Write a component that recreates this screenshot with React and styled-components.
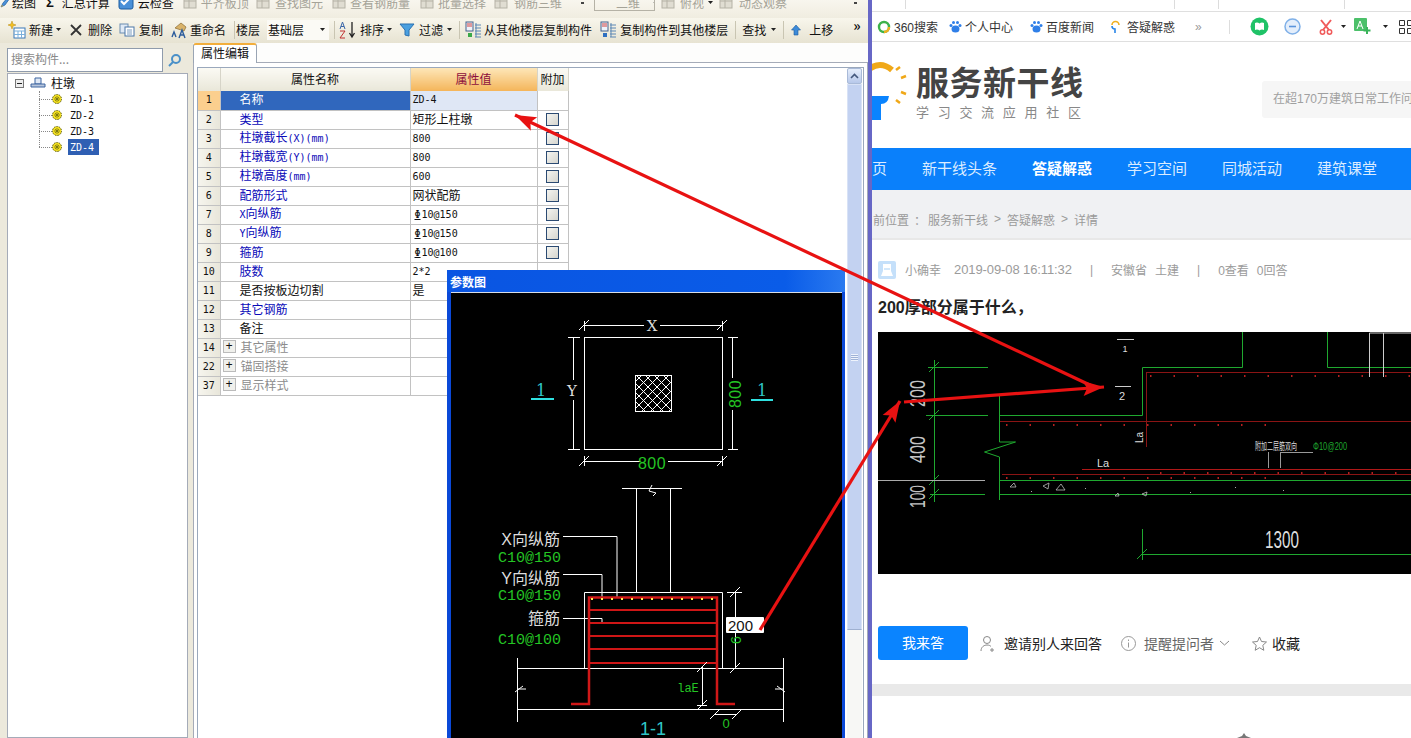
import React from "react";
import styled, { createGlobalStyle } from "styled-components";

const GlobalStyle = createGlobalStyle`
  html, body { margin: 0; padding: 0; background: #fff; overflow: hidden; }
  * { box-sizing: border-box; }
`;

const CJK = `"Noto Sans CJK SC", sans-serif`;
const LATIN_CJK = `"Liberation Sans", "Noto Sans CJK SC", sans-serif`;
const GREEN = "#24c524";
const CYAN = "#2fc6c6";
const CAD_GREEN = "#1fa82f";
const CAD_RED = "#8a1414";

/* ---------- small toolbar icons ---------- */

const Caret = () => (
  <svg width="5" height="3" viewBox="0 0 5 3">
    <path d="M0 0h5L2.5 3z" fill="#222" />
  </svg>
);

const NewIcon = () => (
  <svg width="18" height="18" viewBox="0 0 18 18">
    <rect x="6" y="7" width="11" height="10" fill="#fff" stroke="#3a78b8" />
    <path d="M6 10h11M6 13.5h11M10 10v7M13.5 10v7" stroke="#7ab0dc" />
    <path d="M4 0l1 3 3 1-3 1-1 3-1-3-3-1 3-1z" fill="#f4c020" stroke="#b88a10" strokeWidth=".5" />
  </svg>
);
const DeleteIcon = () => (
  <svg width="12" height="12" viewBox="0 0 12 12">
    <path d="M1 1l10 10M11 1L1 11" stroke="#333" strokeWidth="1.8" />
  </svg>
);
const CopyIcon = () => (
  <svg width="16" height="14" viewBox="0 0 16 14">
    <rect x="1" y="1" width="8" height="9" fill="#dfe9f5" stroke="#6a8cb0" />
    <rect x="6" y="4" width="9" height="9" fill="#fff" stroke="#4a76a8" />
    <path d="M8 7h5M8 9h5M8 11h5" stroke="#7a9cc0" />
  </svg>
);
const RenameIcon = () => (
  <svg width="17" height="18" viewBox="0 0 17 18">
    <path d="M5 7l6-5 5 4-2 4z" fill="#d9b36a" stroke="#8a6a30" strokeWidth=".7" />
    <path d="M2 16l2-5 2 5M9 17l3-8 3 8M10 14h4" fill="none" stroke="#2c5c9c" strokeWidth="1.4" />
  </svg>
);
const SortIcon = () => (
  <svg width="18" height="18" viewBox="0 0 18 18">
    <path d="M1 8l2.5-7L6 8M2 5.5h3" fill="none" stroke="#3a66a8" />
    <path d="M1 10h5l-5 7h5" fill="none" stroke="#c03030" />
    <path d="M13 1v14M10.5 12l2.5 4 2.5-4" fill="none" stroke="#222" strokeWidth="1.3" />
  </svg>
);
const FilterIcon = () => (
  <svg width="16" height="14" viewBox="0 0 16 14">
    <path d="M1 1h14L10 7v6l-4-1V7z" fill="#4aa0e0" stroke="#2a70b0" />
  </svg>
);
const FloorCopyIcon = ({ green }) => (
  <svg width="17" height="17" viewBox="0 0 17 17">
    <rect x="1" y="1" width="7" height="9" fill="#eef3fa" stroke="#44608a" />
    <path d="M2 3h5M2 5h5" stroke="#d04040" />
    <path d="M3 12h4v4H3z" fill={green ? "#3aa848" : "#2f6fc0"} />
    <path d="M10 4h6M10 7h6M10 10h6M10 13h6M10 16h6M11 2v14" stroke="#5a86b4" />
  </svg>
);
const UpIcon = () => (
  <svg width="10" height="12" viewBox="0 0 10 12">
    <path d="M5 1l4.5 5H7v5H3V6H.5z" fill="#3d8ad8" stroke="#1d5ca0" strokeWidth=".6" />
  </svg>
);
const FadedIcon = () => (
  <svg width="15" height="14" viewBox="0 0 15 14">
    <rect x="1" y="1" width="12" height="12" fill="#e0ddd2" stroke="#b5b2a6" />
    <path d="M1 6h12M6 1v12" stroke="#b5b2a6" />
  </svg>
);
const DrawIcon = () => (
  <svg width="10" height="16" viewBox="0 0 10 16">
    <path d="M9 2L3 9l-2 4 4-2 5-7z" fill="#4a90d8" stroke="#1d5ca0" strokeWidth=".7" />
    <path d="M1 13l2-1-1-1z" fill="#f0b020" />
  </svg>
);
const CheckIcon = () => (
  <svg width="16" height="16" viewBox="0 0 16 16">
    <rect x="1" y="1" width="14" height="14" rx="2" fill="#4a90d8" stroke="#1d5ca0" />
    <path d="M3 7l3 3 6-6" fill="none" stroke="#fff" strokeWidth="2" />
  </svg>
);
const SearchGlass = () => (
  <svg width="14" height="14" viewBox="0 0 14 14">
    <circle cx="8" cy="6" r="4" fill="none" stroke="#4a90c8" strokeWidth="2" />
    <path d="M5 9l-4 4" stroke="#4a90c8" strokeWidth="2" />
  </svg>
);
const PierIcon = () => (
  <svg width="16" height="12" viewBox="0 0 16 12">
    <path d="M5 1h6v6H5z" fill="#dfe8f5" stroke="#3c64a0" />
    <path d="M1 7h14v3H1z" fill="#b8c6dc" stroke="#3c64a0" />
  </svg>
);
const GearIcon = () => (
  <svg width="10" height="10" viewBox="0 0 10 10">
    <circle cx="5" cy="5" r="4.5" fill="#f3df20" stroke="#5a5a10" strokeDasharray="1.5 1" />
    <path d="M2 5h6M5 2v6M3 3l4 4M7 3L3 7" stroke="#6a6a10" strokeWidth=".7" />
  </svg>
);

/* ---------- application pane ---------- */

const Page = styled.div`
  position: relative;
  display: flex;
  width: 1411px;
  height: 738px;
  overflow: hidden;
  font-family: ${CJK};
  font-size: 12px;
  color: #111;
`;

const AppPane = styled.div`
  display: flex;
  flex-direction: column;
  width: 868px;
  flex: none;
  background: #ece9dc;
`;

const TopStrip = styled.div`
  height: 18px;
  overflow: hidden;
  background: linear-gradient(#f8f6ee, #f0ede0);
`;

const TopInner = styled.div`
  display: flex;
  align-items: center;
  height: 18px;
  margin-top: -7px;
`;

const Toolbar = styled.div`
  display: flex;
  align-items: center;
  height: 25px;
  padding-bottom: 2px;
  background: linear-gradient(#f8f6ec, #e7e3d2);
`;

const Tool = styled.div`
  display: flex;
  align-items: center;
  flex: none;
  margin-left: ${(p) => p.$ml || 0}px;
  gap: ${(p) => (p.$gap === undefined ? 3 : p.$gap)}px;
  color: ${(p) => (p.$faded ? "#a5a398" : "#111")};
  white-space: nowrap;
`;

const Sigma = styled.b`
  font-family: "Liberation Sans", sans-serif;
  font-size: 13px;
`;

const Handle = styled.div`
  flex: none;
  width: 3px;
  height: 8px;
  margin-left: ${(p) => p.$ml}px;
  background: repeating-linear-gradient(#444 0 2px, transparent 2px 4px);
`;

const Overflow = styled.div`
  flex: none;
  margin: -9px 0 0 ${(p) => p.$ml}px;
  font-size: 14px;
  font-weight: 700;
  line-height: 14px;
`;

const Sep = styled.div`
  flex: none;
  width: 1px;
  height: 18px;
  margin-left: ${(p) => p.$ml || 0}px;
  background: #c9c5b2;
`;

const FloorSelect = styled.div`
  display: flex;
  align-items: center;
  justify-content: space-between;
  flex: none;
  width: 62px;
  height: 20px;
  margin-left: ${(p) => p.$ml || 0}px;
  padding: 0 4px 0 1px;
  background: #fbfaf5;
`;

const ViewSelect = styled.div`
  display: flex;
  align-items: center;
  flex: none;
  width: 61px;
  height: 18px;
  margin-left: ${(p) => p.$ml || 0}px;
  padding-left: 21px;
  gap: 13px;
  white-space: nowrap;
  color: #a5a398;
  border: 1px solid #b5b2a6;
`;

const Body = styled.div`
  display: flex;
  flex: 1;
  min-height: 0;
`;

const Sidebar = styled.div`
  display: flex;
  flex-direction: column;
  flex: none;
  width: 193px;
  padding: 5px 5px 0 7px;
`;

const SearchRow = styled.div`
  display: flex;
  flex: none;
  width: 180px;
  height: 24px;
`;

const SearchInput = styled.div`
  flex: 1;
  padding-left: 3px;
  line-height: 19px;
  color: #8a8a8a;
  background: #fff;
  border: 1px solid #8f9bac;
`;

const SearchButton = styled.div`
  display: flex;
  align-items: center;
  justify-content: center;
  width: 24px;
`;

const Tree = styled.div`
  flex: 1;
  margin-top: 1px;
  padding: 1px 0 0 7px;
  background: #fff;
  border: 1px solid #a5abb8;
`;

const TreeRoot = styled.div`
  display: flex;
  align-items: center;
  height: 16px;
`;

const TreeRootLabel = styled.span`
  margin-left: 5px;
  line-height: 14px;
`;

const MinusBox = styled.div`
  position: relative;
  width: 9px;
  height: 9px;
  margin-right: 6px;
  background: #eee;
  border: 1px solid #777;
  &::after {
    content: "";
    position: absolute;
    left: 1px;
    top: 3px;
    width: 5px;
    height: 1px;
    background: #222;
  }
`;

const ChildList = styled.div`
  position: relative;
  margin-left: 24px;
  &::before {
    content: "";
    position: absolute;
    left: 0;
    top: 0;
    bottom: 8px;
    border-left: 1px dotted #888;
  }
`;

const TreeChild = styled.div`
  display: flex;
  align-items: center;
  height: 16px;
`;

const Connector = styled.div`
  width: 13px;
  border-top: 1px dotted #888;
`;

const Latin = styled.span`
  font-family: "DejaVu Sans Mono", monospace;
  font-size: 10px;
`;

const ChildLabel = styled(Latin)`
  margin-left: 6px;
  padding: 1px 5px 0 2px;
  line-height: 15px;
  color: ${(p) => (p.$selected ? "#fff" : "#111")};
  background: ${(p) => (p.$selected ? "#2f5fb3" : "transparent")};
`;

const Content = styled.div`
  display: flex;
  flex-direction: column;
  flex: 1;
  min-width: 0;
`;

const TabStrip = styled.div`
  display: flex;
  flex: none;
  height: 19px;
  background: #fdfdfc;
`;

const Tab = styled.div`
  width: 64px;
  height: 20px;
  padding-left: 7px;
  line-height: 16px;
  background: #fff;
  border: 1px solid #9aa5b4;
  border-top: 2px solid #f2ae3c;
  border-bottom: none;
  border-radius: 3px 3px 0 0;
  z-index: 1;
`;

const Panel = styled.div`
  display: flex;
  flex: 1;
  min-height: 0;
  padding: 4px 3px 0 3px;
  background: #fff;
  border: 1px solid #a5abb8;
  border-bottom: none;
`;

const GridFrame = styled.div`
  display: flex;
  flex: 1;
  min-width: 0;
  border: 1px solid #9aa8bc;
  border-bottom: none;
  padding-right: 1px;
`;

const GridArea = styled.div`
  flex: 1;
  min-width: 0;
`;

const Table = styled.table`
  width: 370px;
  table-layout: fixed;
  border-collapse: collapse;
  line-height: 14px;
  & col:nth-child(1) { width: 22px; }
  & col:nth-child(2) { width: 190px; }
  & col:nth-child(3) { width: 127px; }
  & col:nth-child(4) { width: 31px; }
`;

const HeadCell = styled.th`
  height: 23px;
  padding: 0 0 2px;
  font-weight: 400;
  font-size: 12px;
  color: ${(p) => (p.$active ? "#8c0f3c" : "#111")};
  background: ${(p) =>
    p.$active
      ? "linear-gradient(#fde6b8, #f4b55a)"
      : "linear-gradient(#fbfaf4, #e9e7d9)"};
  border-right: 1px solid #d6d4c8;
`;

const NumCell = styled.td`
  height: 19px;
  padding: 0;
  text-align: center;
  font-family: "DejaVu Sans Mono", monospace;
  font-size: 10px;
  background: ${(p) =>
    p.$selected ? "#fbcf8e" : "linear-gradient(90deg, #f6f5ee, #e8e6da)"};
  border-bottom: 1px solid #c2c2c2;
`;

const NameCell = styled.td`
  padding: 0 0 2px 19px;
  white-space: nowrap;
  color: ${(p) =>
    p.$selected ? "#fff" : p.$tone === "link" ? "#0a0ab8" : p.$tone === "group" ? "#8c8c8c" : "#111"};
  background: ${(p) => (p.$selected ? "#3067bd" : "#fff")};
  border: 1px solid #c2c2c2;
  border-top: none;
`;

const ValueCell = styled.td`
  padding: 0 0 2px 2px;
  white-space: nowrap;
  overflow: hidden;
  background: ${(p) => (p.$selected ? "#dfe7f5" : "#fff")};
  border: 1px solid #c2c2c2;
  border-top: none;
`;

const AttachCell = styled.td`
  padding: 0;
  background: #fff;
  border: 1px solid #c2c2c2;
  border-top: none;
`;

const CheckBox = styled.div`
  width: 13px;
  height: 13px;
  margin: 0 auto;
  background: linear-gradient(135deg, #f4f4f0, #d5d5cf);
  border: 1px solid #2b4a72;
`;

const GroupName = styled.div`
  display: flex;
  align-items: center;
  margin-left: -17px;
  gap: 5px;
`;

const PlusBox = styled.div`
  display: flex;
  align-items: center;
  justify-content: center;
  width: 13px;
  height: 13px;
  font-family: "Liberation Mono", monospace;
  font-size: 12px;
  line-height: 1;
  color: #111;
  background: #f0f0ec;
  border: 1px solid #bbb;
`;

const RebarMark = styled.span`
  margin-left: 2px;
  margin-right: 1px;
  text-decoration: underline;
`;

const Scrollbar = styled.div`
  display: flex;
  flex-direction: column;
  flex: none;
  width: 15px;
  background: #f7f7f5;
`;

const ScrollUp = styled.div`
  display: flex;
  align-items: center;
  justify-content: center;
  height: 16px;
  background: linear-gradient(#e6eefb, #b7c8ea);
  border: 1px solid #a9bad8;
  border-radius: 2px;
`;

const ScrollThumb = styled.div`
  display: flex;
  align-items: center;
  justify-content: center;
  height: 546px;
  background: #c3d2f1;
  border: 1px solid #d8e2f6;
  border-bottom-color: #9fb0d0;
`;

const Grip = styled.div`
  width: 7px;
  height: 7px;
  background: repeating-linear-gradient(#eef3fc 0 1px, #9fb2d6 1px 2px);
`;

const Divider = styled.div`
  flex: none;
  width: 4px;
  background: #6767c6;
`;

/* ---------- parameter dialog ---------- */

const Dialog = styled.div`
  position: absolute;
  left: 447px;
  top: 270px;
  width: 398px;
  height: 468px;
  display: flex;
  flex-direction: column;
  padding: 0 3px 0 4px;
  background: #0b49d8;
  border-radius: 3px 3px 0 0;
`;

const DialogTitle = styled.div`
  flex: none;
  height: 22px;
  margin: 0 -3px 0 -4px;
  padding: 3px 0 0 3px;
  font-weight: 700;
  line-height: 18px;
  color: #fff;
  background: linear-gradient(90deg, #0a55e2, #0a5ce8 85%, #2a7af0);
`;

const DialogCanvas = styled.div`
  flex: 1;
  background: #000;
  border-top: 1px solid #d8dee8;
  overflow: hidden;
`;

const CadSvg = styled.svg`
  display: block;
`;

const tick = (x, y, key, color = "#fff") => (
  <line key={key} x1={x - 5} y1={y + 5} x2={x + 5} y2={y - 5} stroke={color} />
);

const CadLines = ({ d, color = "#fff", width = 1 }) => (
  <path d={d} fill="none" stroke={color} strokeWidth={width} />
);

const ParamDrawing = () => (
  <CadSvg width="391" height="445" viewBox="451 293 391 445">
    <defs>
      <pattern id="hatch" width="9" height="9" patternUnits="userSpaceOnUse">
        <path d="M0 0l9 9M9 0L0 9" stroke="#fff" strokeWidth="1" />
      </pattern>
    </defs>

    {/* plan */}
    <rect x="584.5" y="337.5" width="138" height="112" fill="none" stroke="#fff" />
    <rect x="635.5" y="375.5" width="36" height="36" fill="url(#hatch)" stroke="#fff" />
    <CadLines d="M584 325.5h60M660 325.5h62M573.5 337v112M732.5 337v112M584 461.5h56M668 461.5h54" />
    <CadLines d="M584.5 321v10M722.5 321v10M568 337.5h12M728 337.5h10M568 449.5h12M728 449.5h10M584.5 456v10M722.5 456v10" />
    {[[584, 325], [722, 325], [584, 461], [722, 461]].map(([x, y], i) => tick(x, y, i))}
    <rect x="566" y="380" width="14" height="20" fill="#000" />
    <rect x="728" y="378" width="15" height="32" fill="#000" />
    <text x="652" y="331" textAnchor="middle" fill="#ddd" fontSize="15" fontFamily="DejaVu Serif, serif">X</text>
    <text x="572" y="396" textAnchor="middle" fill="#ddd" fontSize="15" fontFamily="DejaVu Serif, serif">Y</text>
    <text x="652" y="469" textAnchor="middle" fill={GREEN} fontSize="16" fontFamily="Liberation Sans, sans-serif" letterSpacing="0.5">800</text>
    <text transform="translate(741 394) rotate(-90)" fill={GREEN} textAnchor="middle" fontSize="16" fontFamily="Liberation Sans, sans-serif" letterSpacing="0.5">
      800
    </text>
    <text x="541" y="396" textAnchor="middle" fill={CYAN} fontSize="16" fontFamily="DejaVu Serif, serif">1</text>
    <text x="762" y="396" textAnchor="middle" fill={CYAN} fontSize="16" fontFamily="DejaVu Serif, serif">1</text>
    <CadLines d="M531 399h23M751 400h22" color="#2fe0e0" width="2" />

    {/* section */}
    <CadLines d="M622 488.5h60M636.5 488v104M670.5 488v104M584.5 668V592.5h138V668M517 668.5h266M517 709.5h266M517.5 658v64M783.5 658v64" />
    <CadLines d="M652 485l-3 6 7 2-3 3M517 689h9M515 692l8-6M783 689h-8M785 692l-8-6" />
    <CadLines d="M563 536.5h54V597M563 574.5h39V597M563 618.5h39v5" />

    {/* rebar */}
    <CadLines d="M571 704h18V597.5h128V704h18" color="#d01818" width="2.5" />
    <CadLines d="M589 610h128M589 623h128M589 636h128M589 649h128M589 663h128" color="#cf1616" width="2" />
    {Array.from({ length: 13 }, (_, i) => (
      <rect key={i} x={591 + i * 10} y="598" width="2" height="2" fill="#ffe94a" />
    ))}

    {/* dimensions */}
    <CadLines d="M735.5 592v76M727 592.5h15M702.5 667v38M697 705.5h10M715 714.5h22" />
    {tick(735, 592, "a")}
    {tick(735, 668, "b")}
    {tick(702, 667, "c")}
    {tick(702, 705, "d")}
    {tick(715, 714, "e")}
    {tick(737, 714, "f")}

    {/* labels */}
    <g fontFamily={LATIN_CJK} fontSize="16" fill="#ddd" textAnchor="end">
      <text x="560" y="545">X向纵筋</text>
      <text x="560" y="584">Y向纵筋</text>
      <text x="560" y="624">箍筋</text>
    </g>
    <g fontFamily="Liberation Mono, monospace" fontSize="15" fill={GREEN} textAnchor="end">
      <text x="561" y="562">C10@150</text>
      <text x="561" y="600">C10@150</text>
      <text x="561" y="644">C10@100</text>
    </g>
    <text x="688" y="692" textAnchor="middle" fill={GREEN} fontSize="12" fontFamily="Liberation Mono, monospace">laE</text>
    <text x="726" y="728" textAnchor="middle" fill={GREEN} fontSize="13" fontFamily="Liberation Sans, sans-serif">0</text>
    <text x="653" y="735" textAnchor="middle" fill={CYAN} fontSize="18" fontFamily="Liberation Sans, sans-serif">1-1</text>

    <text transform="translate(741 640) rotate(-90)" textAnchor="middle" fill={GREEN} fontSize="14" fontFamily="Liberation Sans, sans-serif">6</text>
    <rect x="726" y="617" width="38" height="16" rx="1" fill="#fff" />
    <text x="728" y="631" fill="#111" fontSize="15" fontFamily="Liberation Sans, sans-serif">200</text>
  </CadSvg>
);

/* ---------- browser pane ---------- */

const Browser = styled.div`
  display: flex;
  flex-direction: column;
  flex: 1;
  min-width: 0;
  overflow: hidden;
  font-family: ${LATIN_CJK};
  background: #fff;
`;

const TabsLine = styled.div`
  flex: none;
  height: 12px;
  border-bottom: 1px solid #dfdfdf;
`;

const TabsTick = styled.div`
  display: inline-block;
  width: 1px;
  height: 9px;
  margin-left: ${(p) => p.$ml}px;
  background: #dcdcdc;
  vertical-align: top;
`;

const Bookmarks = styled.div`
  display: flex;
  align-items: center;
  flex: none;
  height: 30px;
  padding-left: 5px;
  font-size: 12px;
  color: #333;
  border-bottom: 1px solid #dfdfdf;
`;

const Bookmark = styled.div`
  display: flex;
  align-items: center;
  flex: none;
  margin-left: ${(p) => p.$ml || 0}px;
  gap: ${(p) => (p.$gap === undefined ? 3 : p.$gap)}px;
`;

const BarSep = styled.div`
  flex: none;
  width: 1px;
  height: 14px;
  margin-left: ${(p) => p.$ml}px;
  background: #ddd;
`;

const Chevrons = styled.span`
  margin-left: ${(p) => p.$ml}px;
  color: #999;
`;

const SiteHeader = styled.div`
  display: flex;
  flex: none;
  height: 106px;
`;

const LogoSvg = styled.svg`
  display: block;
  flex: none;
`;

const Brand = styled.div`
  margin: 19px 0 0 8px;
`;

const BrandName = styled.div`
  font-family: ${CJK};
  font-size: 33px;
  font-weight: 700;
  line-height: 40px;
  letter-spacing: 0.5px;
  color: #444;
  white-space: nowrap;
`;

const BrandSlogan = styled.div`
  margin-top: 3px;
  font-size: 13px;
  line-height: 17px;
  letter-spacing: 8.7px;
  color: #888;
  white-space: nowrap;
`;

const SiteSearch = styled.div`
  flex: none;
  width: 149px;
  height: 37px;
  margin: 39px 0 0 auto;
  padding-left: 11px;
  font-size: 12px;
  line-height: 37px;
  color: #a0a0a0;
  white-space: nowrap;
  overflow: hidden;
  background: #f6f6f6;
  border-radius: 3px 0 0 3px;
`;

const Nav = styled.div`
  display: flex;
  align-items: center;
  flex: none;
  gap: 35px;
  height: 42px;
  padding-bottom: 3px;
  font-size: 15px;
  color: #eaf4ff;
  background: #0a80fb;
`;

const NavItem = styled.div`
  white-space: nowrap;
  font-weight: ${(p) => (p.$active ? 700 : 400)};
  color: ${(p) => (p.$active ? "#fff" : "#dcecff")};
`;

const Crumbs = styled.div`
  display: flex;
  align-items: center;
  flex: none;
  height: 50px;
  padding: 10px 0 0 1px;
  font-size: 12px;
  color: #9a9a9a;
  background: #f0f1f3;
  border-bottom: 2px solid #e8e8e8;
`;

const CrumbPart = styled.span`
  margin-left: ${(p) => p.$ml || 0}px;
`;

const Article = styled.div`
  padding: 21px 0 0 6px;
  flex: none;
`;

const MetaRow = styled.div`
  display: flex;
  align-items: center;
  height: 18px;
  padding-bottom: 1px;
  font-size: 12px;
  color: #9b9b9b;
  white-space: nowrap;
`;

const MetaItem = styled.span`
  margin-left: ${(p) => p.$ml || 0}px;
`;

const MetaDate = styled(MetaItem)`
  font-size: 13px;
  letter-spacing: -0.1px;
`;

const Title = styled.div`
  margin-top: 19px;
  font-size: 16px;
  font-weight: 700;
  line-height: 20px;
  color: #222;
`;

const DrawingBox = styled.div`
  width: 533px;
  height: 242px;
  margin-top: 14px;
  background: #000;
`;

const Actions = styled.div`
  display: flex;
  align-items: center;
  flex: none;
  height: 34px;
  margin-top: 52px;
  padding-left: 6px;
  font-size: 14px;
  color: #222;
`;

const AnswerButton = styled.div`
  width: 90px;
  height: 34px;
  font-size: 14px;
  line-height: 34px;
  text-align: center;
  color: #fff;
  background: #0a84ff;
  border-radius: 3px;
`;

const Action = styled.div`
  display: flex;
  align-items: center;
  margin-left: ${(p) => p.$ml}px;
  gap: ${(p) => p.$gap}px;
  color: ${(p) => p.$color || "#222"};
  white-space: nowrap;
`;

const ActionChevron = styled.svg`
  margin-left: -3px;
`;

const Band = styled.div`
  flex: none;
  height: 12px;
  margin-top: 24px;
  background: #e9e9e9;
`;

const BottomMark = styled.svg`
  display: block;
  flex: none;
  margin: 37px 0 0 365px;
`;

const Paw = ({ color = "#2f7fe8" }) => (
  <svg width="13" height="13" viewBox="0 0 13 13">
    <ellipse cx="6.5" cy="9" rx="4" ry="3.5" fill={color} />
    <circle cx="2" cy="5.5" r="1.5" fill={color} />
    <circle cx="11" cy="5.5" r="1.5" fill={color} />
    <circle cx="4.5" cy="2.5" r="1.5" fill={color} />
    <circle cx="8.5" cy="2.5" r="1.5" fill={color} />
  </svg>
);

const LogoMark = () => (
  <LogoSvg width="36" height="80" viewBox="0 0 36 80">
    <path d="M-4 28Q8 18 20 28" fill="none" stroke="#f0a818" strokeWidth="6" />
    <path d="M24 28l4-3M29 36l5-2M29 50l5 2M24 58l4 3" stroke="#f0a818" strokeWidth="2.5" />
    <path d="M0 54h17q-1 8-8 8v16H0z" fill="#0a84ff" />
  </LogoSvg>
);

const SiteDrawing = () => {
  const dots = [
    [372, 1150],
    [421, 1006],
    [474, 1006],
    [469, 1160],
  ];
  return (
    <CadSvg width="533" height="242" viewBox="878 332 533 242">
      <CadLines color={CAD_GREEN} d="M934.5 360v142M928 367.5h60M926 415.5h62M930 480.5h55M930 494.5h55M999.5 396v46l16 0-31 10 15 5v43M999 415.5h143.5V367.5h100V332M1327.5 332v35.5H1411M999 480.5h412M999 494.5h412M1142.5 529v31M1142 554.5h269" />
      {[[934, 367], [934, 415], [934, 480], [934, 494], [1142, 554]].map(([x, y], i) => tick(x, y, i, CAD_GREEN))}
      <CadLines d="M878 480.5h107" color="#aaa" />
      <CadLines color={CAD_RED} d="M1146 372.5h265M1146.5 372v75M1000 421.5h411M1002 474.5h409" />
      <CadLines color="#b01818" d="M1082 469.5h329" />
      {dots.map(([y, start]) =>
        Array.from({ length: 12 }, (_, i) => (
          <rect key={`${y}-${i}`} x={start + i * 23.5} y={y + 3} width="1.5" height="2" fill="#b52020" />
        ))
      )}
      <CadLines d="M1117 339.5h17M1115 386.5h16M1369.5 333h42M1369.5 333v44M1383.5 333v44" color="#ccc" />
      <CadLines d="M1268.5 452v16M1280.5 452v16M1281 452.5h32" color="#999" />
      <g fontFamily="Liberation Sans, sans-serif" fill="#ddd">
        <text x="1125" y="352" textAnchor="middle" fontSize="9">1</text>
        <text x="1122" y="400" textAnchor="middle" fontSize="11">2</text>
        <text x="1097" y="467" fontSize="11">La</text>
        <text transform="translate(1143 443) rotate(-90)" fontSize="10">La</text>
        <g fill="#c4c4c4">
          <text transform="translate(925 407) rotate(-90)" fontSize="22" textLength="27" lengthAdjust="spacingAndGlyphs">200</text>
          <text transform="translate(925 463) rotate(-90)" fontSize="22" textLength="27" lengthAdjust="spacingAndGlyphs">400</text>
          <text transform="translate(925 508) rotate(-90)" fontSize="22" textLength="23" lengthAdjust="spacingAndGlyphs">100</text>
        </g>
        <text x="1265" y="548" fontSize="24" textLength="34" lengthAdjust="spacingAndGlyphs">1300</text>
        <text transform="translate(1255 450) scale(1 1.7)" fontSize="6" fontFamily="Noto Sans CJK SC, sans-serif">附加二层筋双向</text>
      </g>
      <text x="1313" y="450" fontSize="10" fill={CAD_GREEN} fontFamily="Liberation Sans, sans-serif" textLength="34" lengthAdjust="spacingAndGlyphs">Φ10@200</text>
      <g fill="none" stroke="#bbb" strokeWidth=".8">
        <path d="M1010 487l4-4 2 4zM1043 486l6-3-1 6zM1056 490l5-6 4 6zM1115 496l3-3 1 3zM1142 494l5-2-1 4z" />
      </g>
      <g fill="#aaa">
        <rect x="1031" y="491" width="1" height="1" />
        <rect x="1085" y="488" width="1" height="1" />
        <rect x="1190" y="492" width="1" height="1" />
        <rect x="1235" y="487" width="1" height="1" />
        <rect x="1283" y="490" width="1" height="1" />
      </g>
    </CadSvg>
  );
};

/* ---------- annotation arrows ---------- */

const ArrowLayer = styled.svg`
  position: absolute;
  left: 0;
  top: 0;
  pointer-events: none;
`;

const arrowHead = ([x1, y1], [x2, y2]) => {
  const len = Math.hypot(x2 - x1, y2 - y1);
  const ux = (x2 - x1) / len;
  const uy = (y2 - y1) / len;
  const bx = x2 - ux * 21;
  const by = y2 - uy * 21;
  const nx = -uy * 7.5;
  const ny = ux * 7.5;
  return `${x2},${y2} ${bx + nx},${by + ny} ${x2 - ux * 17},${y2 - uy * 17} ${bx - nx},${by - ny}`;
};

const ARROWS = [
  [[1092, 386], [515, 115]],
  [[904, 402], [1104, 387]],
  [[760, 630], [900, 401]],
];

const TABLE_ROWS = [
  { n: 1, name: "名称", value: <Latin>ZD-4</Latin>, selected: true },
  { n: 2, name: "类型", tone: "link", value: "矩形上柱墩", check: true },
  { n: 3, name: <>柱墩截长<Latin>(X)(mm)</Latin></>, tone: "link", value: <Latin>800</Latin>, check: true },
  { n: 4, name: <>柱墩截宽<Latin>(Y)(mm)</Latin></>, tone: "link", value: <Latin>800</Latin>, check: true },
  { n: 5, name: <>柱墩高度<Latin>(mm)</Latin></>, tone: "link", value: <Latin>600</Latin>, check: true },
  { n: 6, name: "配筋形式", tone: "link", value: "网状配筋", check: true },
  { n: 7, name: <><Latin>X</Latin>向纵筋</>, tone: "link", value: <Latin><RebarMark>Φ</RebarMark>10@150</Latin>, check: true },
  { n: 8, name: <><Latin>Y</Latin>向纵筋</>, tone: "link", value: <Latin><RebarMark>Φ</RebarMark>10@150</Latin>, check: true },
  { n: 9, name: "箍筋", tone: "link", value: <Latin><RebarMark>Φ</RebarMark>10@100</Latin>, check: true },
  { n: 10, name: "肢数", tone: "link", value: <Latin>2*2</Latin> },
  { n: 11, name: "是否按板边切割", value: "是" },
  { n: 12, name: "其它钢筋", tone: "link" },
  { n: 13, name: "备注" },
  { n: 14, name: "其它属性", tone: "group" },
  { n: 22, name: "锚固搭接", tone: "group" },
  { n: 37, name: "显示样式", tone: "group" },
];

const TREE_ITEMS = ["ZD-1", "ZD-2", "ZD-3", "ZD-4"];

const App = () => {
  return (
    <Page>
      <GlobalStyle />
      <AppPane>
        <TopStrip>
          <TopInner>
            <Tool $gap={2}><DrawIcon />绘图</Tool>
            <Tool $ml={10} $gap={8}>
              <Sigma>Σ</Sigma>汇总计算
            </Tool>
            <Tool $ml={8} $gap={4}>
              <CheckIcon />云检查
            </Tool>
            <Tool $ml={9} $faded><FadedIcon />平齐板顶</Tool>
            <Tool $ml={7} $faded $gap={4}><FadedIcon />查找图元</Tool>
            <Tool $ml={9} $faded $gap={3}><FadedIcon />查看钢筋量</Tool>
            <Tool $ml={10} $faded $gap={3}><FadedIcon />批量选择</Tool>
            <Tool $ml={8} $faded $gap={5}><FadedIcon />钢筋三维</Tool>
            <Handle $ml={19} />
            <ViewSelect $ml={10}>二维<Caret /></ViewSelect>
            <Tool $ml={6} $faded $gap={4}><FadedIcon />俯视<Caret /></Tool>
            <Tool $ml={6} $faded $gap={5}><FadedIcon />动态观察</Tool>
            <Handle $ml={67} />
          </TopInner>
        </TopStrip>

        <Toolbar>
          <Tool $ml={8}><NewIcon />新建<Caret /></Tool>
          <Tool $ml={9} $gap={6}><DeleteIcon />删除</Tool>
          <Tool $ml={7} $gap={4}><CopyIcon />复制</Tool>
          <Tool $ml={7}><RenameIcon />重命名</Tool>
          <Sep $ml={8} />
          <Tool $ml={1}>楼层</Tool>
          <FloorSelect $ml={7}>基础层<Caret /></FloorSelect>
          <Sep $ml={5} />
          <Tool $ml={4}><SortIcon />排序<Caret /></Tool>
          <Tool $ml={7} $gap={4}><FilterIcon />过滤<Caret /></Tool>
          <Sep $ml={7} />
          <Tool $ml={5} $gap={2}><FloorCopyIcon green />从其他楼层复制构件</Tool>
          <Tool $ml={8}><FloorCopyIcon />复制构件到其他楼层</Tool>
          <Sep $ml={7} />
          <Tool $ml={6} $gap={5}>查找<Caret /></Tool>
          <Sep $ml={7} />
          <Tool $ml={7} $gap={8}><UpIcon />上移</Tool>
          <Overflow $ml={20}>»</Overflow>
        </Toolbar>

        <Body>
          <Sidebar>
            <SearchRow>
              <SearchInput>搜索构件...</SearchInput>
              <SearchButton><SearchGlass /></SearchButton>
            </SearchRow>
            <Tree>
              <TreeRoot>
                <MinusBox />
                <PierIcon />
                <TreeRootLabel>柱墩</TreeRootLabel>
              </TreeRoot>
              <ChildList>
                {TREE_ITEMS.map((item, i) => (
                  <TreeChild key={item}>
                    <Connector />
                    <GearIcon />
                    <ChildLabel $selected={i === 3}>{item}</ChildLabel>
                  </TreeChild>
                ))}
              </ChildList>
            </Tree>
          </Sidebar>

          <Content>
            <TabStrip>
              <Tab>属性编辑</Tab>
            </TabStrip>
            <Panel>
              <GridFrame>
                <GridArea>
                  <Table>
                    <colgroup><col /><col /><col /><col /></colgroup>
                    <thead>
                      <tr>
                        <HeadCell />
                        <HeadCell>属性名称</HeadCell>
                        <HeadCell $active>属性值</HeadCell>
                        <HeadCell>附加</HeadCell>
                      </tr>
                    </thead>
                    <tbody>
                      {TABLE_ROWS.map((row) => (
                        <tr key={row.n}>
                          <NumCell $selected={row.selected}>{row.n}</NumCell>
                          <NameCell $selected={row.selected} $tone={row.tone}>
                            {row.tone === "group" ? (
                              <GroupName><PlusBox>+</PlusBox>{row.name}</GroupName>
                            ) : (
                              row.name
                            )}
                          </NameCell>
                          <ValueCell $selected={row.selected}>{row.value}</ValueCell>
                          <AttachCell>{row.check && <CheckBox />}</AttachCell>
                        </tr>
                      ))}
                    </tbody>
                  </Table>
                </GridArea>
                <Scrollbar>
                  <ScrollUp>
                    <svg width="9" height="6" viewBox="0 0 9 6">
                      <path d="M1 5l3.5-3.5L8 5" fill="none" stroke="#44587c" strokeWidth="1.6" />
                    </svg>
                  </ScrollUp>
                  <ScrollThumb><Grip /></ScrollThumb>
                </Scrollbar>
              </GridFrame>
            </Panel>
          </Content>
        </Body>
      </AppPane>

      <Divider />

      <Browser>
        <TabsLine>
          <TabsTick $ml={33} />
          <TabsTick $ml={268} />
          <TabsTick $ml={43} />
          <TabsTick $ml={125} />
        </TabsLine>
        <Bookmarks>
          <Bookmark>
            <svg width="14" height="14" viewBox="0 0 14 14">
              <circle cx="7" cy="7" r="5" fill="none" stroke="#3db24a" strokeWidth="2.4" />
              <path d="M7 12a5 5 0 0 0 5-5" fill="none" stroke="#f0b020" strokeWidth="2.4" />
            </svg>
            360搜索
          </Bookmark>
          <Bookmark $ml={11}><Paw />个人中心</Bookmark>
          <Bookmark $ml={17}><Paw />百度新闻</Bookmark>
          <Bookmark $ml={17} $gap={7}>
            <svg width="9" height="14" viewBox="0 0 9 14">
              <path d="M1 5a3.5 3.5 0 0 1 7 0" fill="none" stroke="#f0b020" strokeWidth="1.6" />
              <path d="M1 6q0 3 3 3v4" fill="none" stroke="#2a86e8" strokeWidth="1.6" />
            </svg>
            答疑解惑
          </Bookmark>
          <Chevrons $ml={20}>»</Chevrons>
          <BarSep $ml={27} />
          <Bookmark $ml={20}>
            <svg width="19" height="19" viewBox="0 0 19 19">
              <circle cx="9.5" cy="9.5" r="9" fill="#1fc267" />
              <path d="M5 6q2.5-1 4.500 .5Q11.5 5 14 6v7q-2.5-1-4.500 .5Q7.5 12 5 13z" fill="#fff" />
            </svg>
          </Bookmark>
          <Bookmark $ml={15}>
            <svg width="17" height="17" viewBox="0 0 17 17">
              <circle cx="8.5" cy="8.5" r="7.5" fill="#e4eefb" stroke="#7fb0e8" strokeWidth="1.5" />
              <path d="M5 8.5h7" stroke="#5a94dc" strokeWidth="1.6" />
            </svg>
          </Bookmark>
          <Bookmark $ml={18} $gap={8}>
            <svg width="14" height="16" viewBox="0 0 14 16">
              <path d="M2 1l8 10M12 1L4 11" stroke="#f05a5a" strokeWidth="2" />
              <circle cx="3.5" cy="13" r="2.2" fill="none" stroke="#f05a5a" strokeWidth="1.5" />
              <circle cx="10.5" cy="13" r="2.2" fill="none" stroke="#f05a5a" strokeWidth="1.5" />
            </svg>
            <Caret />
          </Bookmark>
          <Bookmark $ml={8} $gap={12}>
            <svg width="17" height="17" viewBox="0 0 17 17">
              <rect x="0" y="0" width="13" height="13" rx="1" fill="#4cc06a" />
              <path d="M3 11l3-8 3 8M4 8h4" stroke="#fff" fill="none" />
              <path d="M13 9v7M9.5 12.5h7" stroke="#3ab45a" strokeWidth="2" />
            </svg>
            <Caret />
          </Bookmark>
          <Bookmark $ml={11}>
            <svg width="12" height="16" viewBox="0 0 12 16">
              <path d="M.5 1.5h5v5h-5zM.5 9.5h5v5h-5zM8.5 1.5h5v5h-5zM8.5 9.5h5v5h-5z" fill="none" stroke="#333" />
            </svg>
          </Bookmark>
        </Bookmarks>

        <SiteHeader>
          <LogoMark />
          <Brand>
            <BrandName>服务新干线</BrandName>
            <BrandSlogan>学习交流应用社区</BrandSlogan>
          </Brand>
          <SiteSearch>在超170万建筑日常工作问</SiteSearch>
        </SiteHeader>

        <Nav>
          <NavItem>页</NavItem>
          <NavItem>新干线头条</NavItem>
          <NavItem $active>答疑解惑</NavItem>
          <NavItem>学习空间</NavItem>
          <NavItem>同城活动</NavItem>
          <NavItem>建筑课堂</NavItem>
        </Nav>

        <Crumbs>
          <CrumbPart>前位置</CrumbPart>
          <CrumbPart $ml={5}>：</CrumbPart>
          <CrumbPart $ml={2}>服务新干线</CrumbPart>
          <CrumbPart $ml={6}>&gt;</CrumbPart>
          <CrumbPart $ml={6}>答疑解惑</CrumbPart>
          <CrumbPart $ml={6}>&gt;</CrumbPart>
          <CrumbPart $ml={6}>详情</CrumbPart>
        </Crumbs>

        <Article>
          <MetaRow>
            <svg width="18" height="18" viewBox="0 0 18 18">
              <rect width="18" height="18" rx="2" fill="#c5e0fa" />
              <path d="M5 3h8v7l2 5H3l2-5z" fill="#fff" />
              <path d="M6 8h6" stroke="#c5e0fa" strokeWidth="1.5" />
            </svg>
            <MetaItem $ml={9}>小确幸</MetaItem>
            <MetaDate $ml={13}>2019-09-08 16:11:32</MetaDate>
            <MetaItem $ml={18}>|</MetaItem>
            <MetaItem $ml={18}>安徽省</MetaItem>
            <MetaItem $ml={8}>土建</MetaItem>
            <MetaItem $ml={18}>|</MetaItem>
            <MetaItem $ml={18}>0查看</MetaItem>
            <MetaItem $ml={8}>0回答</MetaItem>
          </MetaRow>
          <Title>200厚部分属于什么，</Title>
          <DrawingBox><SiteDrawing /></DrawingBox>
        </Article>

        <Actions>
          <AnswerButton>我来答</AnswerButton>
          <Action $ml={12} $gap={9}>
            <svg width="15" height="17" viewBox="0 0 15 17">
              <circle cx="7" cy="5" r="3.5" fill="none" stroke="#888" />
              <path d="M1 16c0-4 3-6 6-6 2 0 3 .5 4 1.5M12 13v4M10 15h4" fill="none" stroke="#888" />
            </svg>
            邀请别人来回答
          </Action>
          <Action $ml={19} $gap={8} $color="#666">
            <svg width="15" height="15" viewBox="0 0 15 15">
              <circle cx="7.5" cy="7.5" r="7" fill="none" stroke="#999" />
              <path d="M7.5 6.5v5M7.5 3.5v1.5" stroke="#999" />
            </svg>
            提醒提问者
            <ActionChevron width="11" height="6" viewBox="0 0 11 6">
              <path d="M1 1l4.5 4L10 1" fill="none" stroke="#888" />
            </ActionChevron>
          </Action>
          <Action $ml={22} $gap={5}>
            <svg width="15" height="15" viewBox="0 0 15 15">
              <path d="M7.5 1l2 4.5 5 .5-3.7 3.3 1 5-4.3-2.6-4.3 2.6 1-5L.5 6l5-.5z" fill="none" stroke="#888" />
            </svg>
            收藏
          </Action>
        </Actions>

        <Band />
        <BottomMark width="14" height="5" viewBox="0 0 14 5">
          <path d="M7 0l2 3 5 2H0l5-2z" fill="#777" />
        </BottomMark>
      </Browser>

      <Dialog>
        <DialogTitle>参数图</DialogTitle>
        <DialogCanvas><ParamDrawing /></DialogCanvas>
      </Dialog>

      <ArrowLayer width="1411" height="738" viewBox="0 0 1411 738">
        {ARROWS.map(([tail, tip]) => (
          <g key={tip.join()}>
            <line x1={tail[0]} y1={tail[1]} x2={tip[0]} y2={tip[1]} stroke="#e81212" strokeWidth="3.2" />
            <polygon points={arrowHead(tail, tip)} fill="#e81212" />
          </g>
        ))}
      </ArrowLayer>
    </Page>
  );
};

export default App;
